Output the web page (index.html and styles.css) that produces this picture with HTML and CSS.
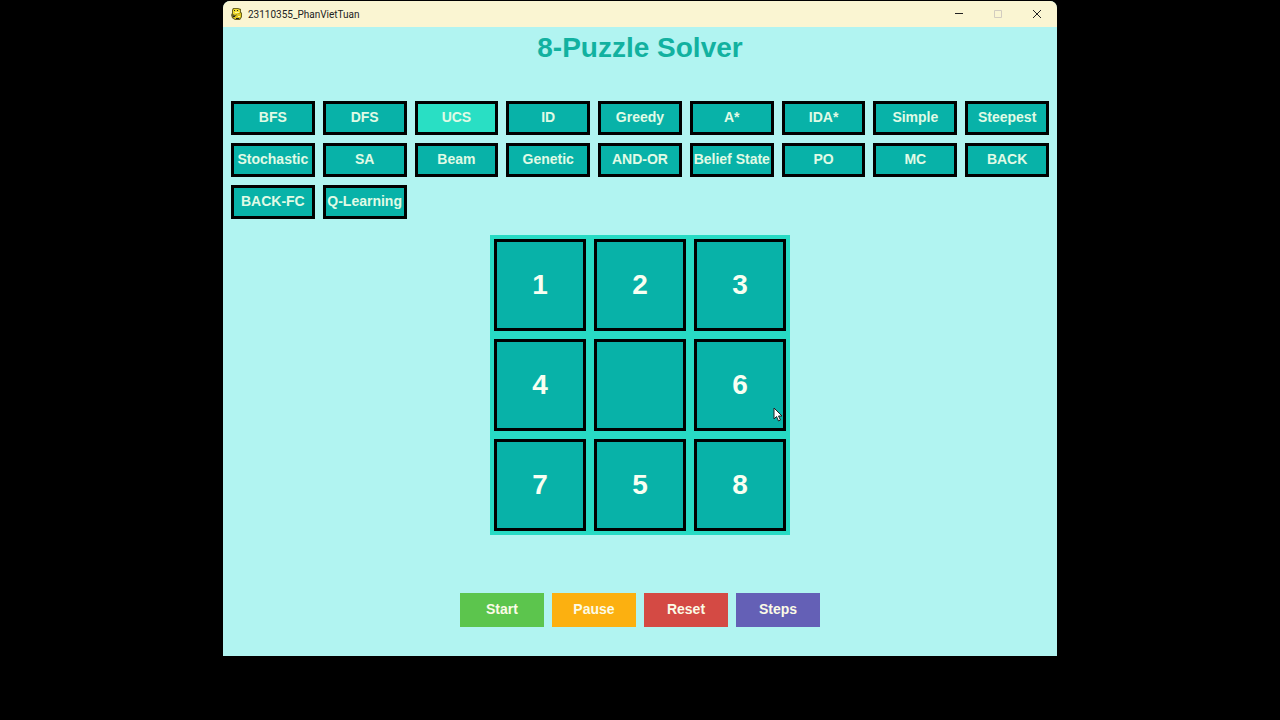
FILE: index.html
```html
<!DOCTYPE html>
<html lang="en">
<head>
<meta charset="utf-8">
<title>8-Puzzle Solver</title>
<link rel="stylesheet" href="styles.css">
</head>
<body>
<div class="window">
  <header class="titlebar">
    <svg class="app-icon" viewBox="0 0 14 14" aria-hidden="true">
      <path d="M3 1h5l3 1v3l1 1v4l-2 3H5l-3-2-1-3 1-2V3z" fill="#6b6420"/>
      <path d="M4 2h4l2 1v3l-3 1-2 1-2-1V3z" fill="#f0dc30"/>
      <path d="M7 7l4-1v4l-2 2H5l-2-2 3-1z" fill="#e0c820"/>
      <path d="M4 3h1v1H4zM7 3h1v1H7zM3 9h2v1H3zM6 11h3v1H6z" fill="#222"/>
      <path d="M5 5h4v1H5zM8 9h2v1H8z" fill="#fff8a0"/>
    </svg>
    <span class="window-name">23110355_PhanVietTuan</span>
    <div class="window-controls">
      <button class="window-button" aria-label="Minimize"><svg viewBox="0 0 10 10"><path d="M1 4.500h8"/></svg></button>
      <button class="window-button disabled" aria-label="Maximize" disabled><svg viewBox="0 0 10 10"><path d="M1.500 1.500h7v7h-7z"/></svg></button>
      <button class="window-button" aria-label="Close"><svg viewBox="0 0 10 10"><path d="M1 1l8 8M9 1L1 9"/></svg></button>
    </div>
  </header>
  <main class="content">
    <h1 class="title">8-Puzzle Solver</h1>
    <div class="algorithms">
      <button class="algorithm">BFS</button>
      <button class="algorithm">DFS</button>
      <button class="algorithm selected">UCS</button>
      <button class="algorithm">ID</button>
      <button class="algorithm">Greedy</button>
      <button class="algorithm">A*</button>
      <button class="algorithm">IDA*</button>
      <button class="algorithm">Simple</button>
      <button class="algorithm">Steepest</button>
      <button class="algorithm">Stochastic</button>
      <button class="algorithm">SA</button>
      <button class="algorithm">Beam</button>
      <button class="algorithm">Genetic</button>
      <button class="algorithm">AND-OR</button>
      <button class="algorithm">Belief State</button>
      <button class="algorithm">PO</button>
      <button class="algorithm">MC</button>
      <button class="algorithm">BACK</button>
      <button class="algorithm">BACK-FC</button>
      <button class="algorithm">Q-Learning</button>
    </div>
    <div class="board">
      <div class="tile">1</div>
      <div class="tile">2</div>
      <div class="tile">3</div>
      <div class="tile">4</div>
      <div class="tile"></div>
      <div class="tile">6<svg class="pointer" viewBox="0 0 10 15" aria-hidden="true"><path d="M1 1v11l2.500-2.500L5.500 14l2-1-2-4H9z"/></svg></div>
      <div class="tile">7</div>
      <div class="tile">5</div>
      <div class="tile">8</div>
    </div>
    <div class="actions">
      <button class="action start">Start</button>
      <button class="action pause">Pause</button>
      <button class="action reset">Reset</button>
      <button class="action steps">Steps</button>
    </div>
  </main>
</div>
</body>
</html>
```
FILE: styles.css
```css
* {
  box-sizing: border-box;
}

body {
  margin: 0;
  background: #000;
  font-family: "Liberation Sans", Arial, sans-serif;
}

button {
  margin: 0;
  padding: 0;
  border: 0;
  font: inherit;
}

.window {
  width: 65.16%;
  margin: 1px auto 0;
  overflow: hidden;
  border-radius: 7px 7px 0 0;
  background: #b1f4f1;
}

.titlebar {
  display: flex;
  align-items: center;
  height: 26px;
  padding: 0 1px 0 7px;
  background: #faf5d2;
}

.app-icon {
  width: 14px;
  height: 14px;
}

.window-name {
  margin-left: 4px;
  color: #222;
  font-family: Roboto, sans-serif;
  font-size: 10px;
}

.window-controls {
  display: flex;
  margin-left: auto;
}

.window-button {
  display: flex;
  align-items: center;
  justify-content: center;
  width: 39px;
  height: 26px;
  background: transparent;
  color: #222;
}

.window-button.disabled {
  color: #d2ccc0;
}

.window-button svg {
  width: 10px;
  height: 10px;
  fill: none;
  stroke: currentColor;
}

.content {
  padding: 0 8px 29px;
}

.title {
  margin: 0 0 32px;
  color: #12b1a0;
  font-size: 28px;
  line-height: 42px;
  text-align: center;
}

.algorithms {
  display: grid;
  grid-template-columns: repeat(9, 1fr);
  gap: 8px;
}

.algorithm,
.action {
  height: 34px;
  padding-bottom: 2px;
  color: #e0fbe6;
  font-size: 14px;
  font-weight: bold;
  white-space: nowrap;
}

.algorithm {
  border: 3px solid #000;
  background: #08b2a8;
}

.algorithm.selected {
  background: #29dfc4;
}

.board {
  display: grid;
  grid-template-columns: repeat(3, 92px);
  gap: 8px;
  width: fit-content;
  margin: 16px auto 58px;
  padding: 4px;
  background: #28dac4;
}

.tile {
  position: relative;
  display: flex;
  align-items: center;
  justify-content: center;
  height: 92px;
  border: 3px solid #000;
  background: #08b2a8;
  color: #f8fff2;
  font-size: 28px;
  font-weight: bold;
}

.pointer {
  position: absolute;
  right: 0;
  bottom: 6px;
  width: 10px;
  height: 15px;
  fill: #fff;
  stroke: #222;
}

.actions {
  display: flex;
  justify-content: center;
  gap: 8px;
}

.action {
  width: 84px;
  color: #fbfbe6;
}

.start {
  background: #5cc54d;
}

.pause {
  background: #fcb010;
}

.reset {
  background: #d44a44;
}

.steps {
  background: #6460b6;
}
```
